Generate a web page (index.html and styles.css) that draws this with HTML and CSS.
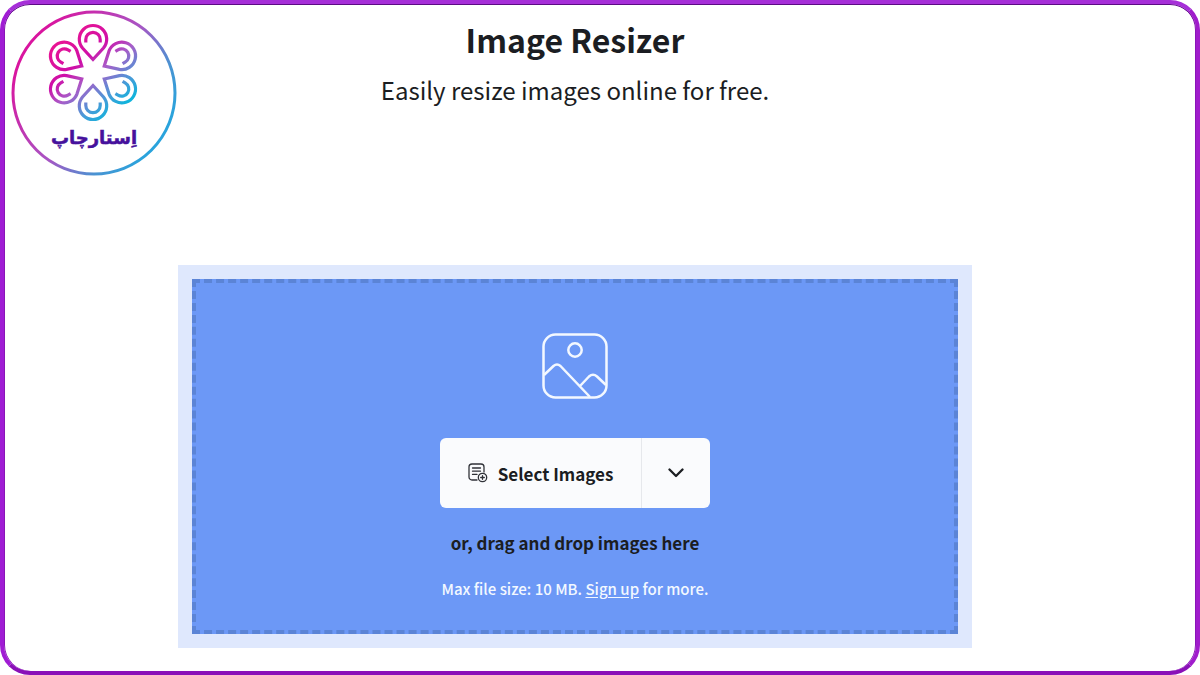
FILE: index.html
```html
<!DOCTYPE html>
<html lang="en">
<head>
<meta charset="utf-8">
<meta name="viewport" content="width=device-width, initial-scale=1">
<title>Image Resizer</title>
<link rel="stylesheet" href="styles.css">
</head>
<body>
<div class="frame">
  <svg class="logo" viewBox="0 0 168 168" role="img" aria-label="اِستارچاپ">
    <defs>
      <linearGradient id="ring" gradientUnits="userSpaceOnUse" x1="20" y1="40" x2="148" y2="128">
        <stop offset="0" stop-color="#d9159f"/>
        <stop offset=".5" stop-color="#a855c4"/>
        <stop offset=".8" stop-color="#4a93d2"/>
        <stop offset="1" stop-color="#2aa3dc"/>
      </linearGradient>
      <linearGradient id="flower" gradientUnits="userSpaceOnUse" x1="52" y1="24" x2="112" y2="98">
        <stop offset="0" stop-color="#ec1590"/>
        <stop offset=".36" stop-color="#cf0fa8"/>
        <stop offset=".56" stop-color="#a85cc8"/>
        <stop offset=".82" stop-color="#489bd8"/>
        <stop offset="1" stop-color="#10b4dc"/>
      </linearGradient>
      <g id="petal">
        <path d="M83 50.500 72.500 39A13.700 13.700 0 1 1 93.500 39Z"/>
        <path d="M75.800 33.500V30.500a7.200 7.200 0 0 1 14.400 0v3"/>
      </g>
      <mask id="petals" maskUnits="userSpaceOnUse" x="0" y="0" width="168" height="168">
        <g fill="none" stroke="#fff" stroke-width="3.200">
          <use href="#petal"/>
          <use href="#petal" transform="rotate(60 83 63.500)"/>
          <use href="#petal" transform="rotate(120 83 63.500)"/>
          <use href="#petal" transform="rotate(180 83 63.500)"/>
          <use href="#petal" transform="rotate(240 83 63.500)"/>
          <use href="#petal" transform="rotate(300 83 63.500)"/>
        </g>
      </mask>
    </defs>
    <circle cx="84" cy="84" r="81" fill="none" stroke="url(#ring)" stroke-width="3"/>
    <rect x="30" y="8" width="106" height="110" fill="url(#flower)" mask="url(#petals)"/>
    <text class="logo-name" x="84" y="135" text-anchor="middle">اِستارچاپ</text>
  </svg>

  <main class="content">
    <h1 class="title">Image Resizer</h1>
    <p class="subtitle">Easily resize images online for free.</p>

    <section class="uploader">
      <div class="dropzone">
        <svg class="picture" viewBox="0 0 66 66" fill="none" stroke="#f3f8ff" stroke-width="2.500" stroke-linejoin="round" aria-hidden="true">
          <rect x="1.500" y="1.500" width="63" height="63" rx="12"/>
          <circle cx="33" cy="17" r="6.700"/>
          <path d="M2 42 11.500 33Q15 30 18.500 33L48 64M38 53 47 43.500Q51 40 55 43.500L64 52"/>
        </svg>
        <div class="picker">
          <button class="picker-main" type="button">
            <svg class="picker-icon" viewBox="0 0 20 20" fill="none" stroke="#303238" stroke-width="1.300" stroke-linecap="round" aria-hidden="true">
              <path d="M9 17H4a3 3 0 0 1-3-3V4a3 3 0 0 1 3-3h9a3 3 0 0 1 3 3v5M4.500 5h8M4.500 8.200h8M4.500 11.400h4.500"/>
              <circle cx="14.500" cy="14.500" r="4.200"/>
              <path d="M14.500 12.700v3.600M12.700 14.500h3.600"/>
            </svg>
            Select Images
          </button>
          <button class="picker-more" type="button" aria-label="More sources">
            <svg class="chevron" viewBox="0 0 16 10" fill="none" stroke="#1c1e22" stroke-width="2.300" stroke-linecap="round" stroke-linejoin="round" aria-hidden="true"><path d="m1.500 1.500 6.500 6.500 6.500-6.500"/></svg>
          </button>
        </div>
        <p class="hint">or, drag and drop images here</p>
        <p class="limit">Max file size: 10 MB. <a href="#signup">Sign up</a> for more.</p>
      </div>
    </section>
  </main>
</div>
</body>
</html>
```
FILE: styles.css
```css
* {
  box-sizing: border-box;
}

body {
  margin: 0;
  background: #fff;
  color: #1b1d22;
  font-family: "Noto Sans CJK SC", "Noto Sans", sans-serif;
}

.frame {
  position: relative;
  min-height: 100vh;
  padding: 15px 50px 22px 0;
  border: 4px solid;
  border-color: #a62fd8 #a01ccc #8a10b8 #a01cd4;
  border-radius: 30px;
  box-shadow: inset 0 1px 0 #5c0c84, inset 1px 0 0 #8a14b8, inset -1px 0 0 #8a14b8;
}

.logo {
  position: absolute;
  top: 5px;
  left: 6px;
  width: 168px;
  height: 168px;
}

.logo-name {
  fill: #46119c;
  stroke: #46119c;
  stroke-width: 0.5px;
  font-family: "DejaVu Sans", sans-serif;
  font-size: 18px;
  font-weight: 700;
}

.content {
  display: flex;
  flex-direction: column;
  align-items: center;
  text-align: center;
}

.title {
  margin: 0;
  font-size: 32px;
  font-weight: 700;
  line-height: 40px;
}

.subtitle {
  margin: 11px 0 0;
  font-size: 24px;
  line-height: 40px;
}

.uploader {
  width: 100%;
  max-width: 794px;
  margin-top: 155px;
  padding: 14px;
  background: #dfe8fd;
}

.dropzone {
  display: flex;
  flex-direction: column;
  align-items: center;
  padding: 50px 16px 29px;
  border: 4px dashed #5b84d6;
  background: #6c98f6;
}

.picture {
  width: 66px;
  height: 66px;
}

.picker {
  display: flex;
  height: 70px;
  margin-top: 39px;
  border-radius: 6px;
  background: #fafbfd;
}

.picker button {
  display: flex;
  align-items: center;
  justify-content: center;
  border: 0;
  background: none;
  color: inherit;
  font: inherit;
  cursor: pointer;
}

.picker .picker-main {
  gap: 10px;
  padding: 0 28px;
  font-size: 17px;
  font-weight: 700;
}

.picker-icon {
  width: 20px;
  height: 20px;
}

.picker .picker-more {
  width: 69px;
  padding: 0;
  border-left: 1px solid #e6e8ec;
}

.chevron {
  width: 16px;
  height: 10px;
}

.hint {
  margin: 23px 0 0;
  font-size: 17px;
  font-weight: 700;
  line-height: 24px;
}

.limit {
  margin: 22px 0 0;
  color: #f3f8ff;
  font-size: 15px;
  font-weight: 500;
  line-height: 24px;
}

.limit a {
  color: inherit;
  text-underline-offset: 2px;
}
```
